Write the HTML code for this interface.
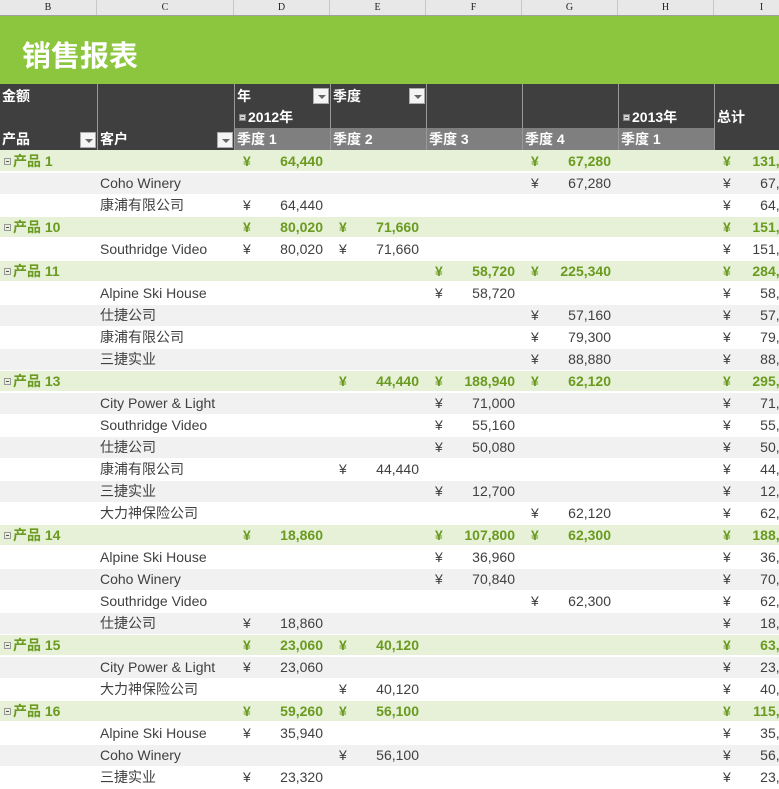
<!DOCTYPE html>
<html><head><meta charset="utf-8"><style>
*{margin:0;padding:0;box-sizing:border-box}
body{width:779px;height:779px;overflow:hidden;background:#fff;font-family:"Liberation Sans","Noto Sans CJK SC",sans-serif;position:relative}
.colbar{position:absolute;left:0;top:0;width:810px;height:16px;background:#e8e8e8;border-bottom:1px solid #a0a0a0;display:flex}
.colbar div{height:15px;font:10px "Liberation Serif",serif;text-align:center;line-height:15px;color:#222;border-right:1px solid #c8c8c8}
.title{position:absolute;left:0;top:16px;width:779px;height:68px;background:#8bc63e;color:#fff;font:bold 29px "Liberation Sans","Noto Sans CJK SC",sans-serif;padding:17px 0 0 22px}
.hdr{position:absolute;left:0;top:84px;width:810px;height:66px;background:#3f3f3f}
.gray{position:absolute;top:128px;left:234px;width:480px;height:22px;background:#7f7f7f}
.vl{position:absolute;top:84px;height:66px;width:1px;background:#999}
.ht{position:absolute;color:#fff;font-weight:bold;font-size:14px;line-height:16px}
.dd{position:absolute;width:16px;height:16px;background:#f4f4f4;border:1px solid #aaa}
.dd:after{content:"";position:absolute;left:4px;top:6px;border-left:4px solid transparent;border-right:4px solid transparent;border-top:4px solid #666}
.mn{display:inline-block;width:7px;height:7px;background:#ccc;border:1px solid #888;margin-right:2px;vertical-align:1px;position:relative}
.mn:after{content:"";position:absolute;left:1px;top:2px;width:3px;height:1px;background:#555}
table{position:absolute;left:0;top:150px;border-collapse:collapse;table-layout:fixed;width:810px;font-size:14px;color:#404040}
td{height:22px;padding:0;white-space:nowrap;overflow:hidden;border-bottom:1px solid #fff}
tr.p td{background:#e6f1d8;color:#6a9a1f;font-weight:bold;border-bottom:2px solid #fff}
tr.g td{background:#f1f1f1}
td.c{padding-left:3px}
.v{display:flex;justify-content:space-between;padding:0 7px 0 9px}
tr.p .mn{background:#e6f1d8;border-color:#999;margin:0 2px 0 4px}
</style></head><body>
<div class="colbar"><div style="width:97px">B</div><div style="width:137px">C</div><div style="width:96px">D</div><div style="width:96px">E</div><div style="width:96px">F</div><div style="width:96px">G</div><div style="width:96px">H</div><div style="width:96px">I</div></div>
<div class="title">销售报表</div>
<div class="hdr"></div>
<div class="gray"></div>
<div class="vl" style="left:97px"></div><div class="vl" style="left:234px"></div><div class="vl" style="left:330px"></div><div class="vl" style="left:426px"></div><div class="vl" style="left:522px"></div><div class="vl" style="left:618px"></div><div class="vl" style="left:714px"></div>
<div class="ht" style="left:2px;top:88px">金额</div>
<div class="ht" style="left:237px;top:88px">年</div>
<div class="ht" style="left:333px;top:88px">季度</div>
<div class="dd" style="left:313px;top:88px"></div>
<div class="dd" style="left:409px;top:88px"></div>
<div class="ht" style="left:239px;top:109px"><span class="mn"></span>2012年</div>
<div class="ht" style="left:623px;top:109px"><span class="mn"></span>2013年</div>
<div class="ht" style="left:717px;top:109px">总计</div>
<div class="ht" style="left:2px;top:131px">产品</div>
<div class="ht" style="left:100px;top:131px">客户</div>
<div class="dd" style="left:80px;top:132px"></div>
<div class="dd" style="left:217px;top:132px"></div>
<div class="ht" style="left:237px;top:131px">季度 1</div>
<div class="ht" style="left:333px;top:131px">季度 2</div>
<div class="ht" style="left:429px;top:131px">季度 3</div>
<div class="ht" style="left:525px;top:131px">季度 4</div>
<div class="ht" style="left:621px;top:131px">季度 1</div>
<table>
<colgroup><col style="width:97px"><col style="width:137px"><col style="width:96px"><col style="width:96px"><col style="width:96px"><col style="width:96px"><col style="width:96px"><col style="width:96px"></colgroup>
<tr class="p"><td><span class="mn"></span>产品 1</td><td></td><td><div class="v"><span>¥</span><span>64,440</span></div></td><td></td><td></td><td><div class="v"><span>¥</span><span>67,280</span></div></td><td></td><td><div class="v"><span>¥</span><span>131,720</span></div></td></tr>
<tr class="g"><td></td><td class="c">Coho Winery</td><td></td><td></td><td></td><td><div class="v"><span>¥</span><span>67,280</span></div></td><td></td><td><div class="v"><span>¥</span><span>67,280</span></div></td></tr>
<tr><td></td><td class="c">康浦有限公司</td><td><div class="v"><span>¥</span><span>64,440</span></div></td><td></td><td></td><td></td><td></td><td><div class="v"><span>¥</span><span>64,440</span></div></td></tr>
<tr class="p"><td><span class="mn"></span>产品 10</td><td></td><td><div class="v"><span>¥</span><span>80,020</span></div></td><td><div class="v"><span>¥</span><span>71,660</span></div></td><td></td><td></td><td></td><td><div class="v"><span>¥</span><span>151,680</span></div></td></tr>
<tr><td></td><td class="c">Southridge Video</td><td><div class="v"><span>¥</span><span>80,020</span></div></td><td><div class="v"><span>¥</span><span>71,660</span></div></td><td></td><td></td><td></td><td><div class="v"><span>¥</span><span>151,680</span></div></td></tr>
<tr class="p"><td><span class="mn"></span>产品 11</td><td></td><td></td><td></td><td><div class="v"><span>¥</span><span>58,720</span></div></td><td><div class="v"><span>¥</span><span>225,340</span></div></td><td></td><td><div class="v"><span>¥</span><span>284,060</span></div></td></tr>
<tr><td></td><td class="c">Alpine Ski House</td><td></td><td></td><td><div class="v"><span>¥</span><span>58,720</span></div></td><td></td><td></td><td><div class="v"><span>¥</span><span>58,720</span></div></td></tr>
<tr class="g"><td></td><td class="c">仕捷公司</td><td></td><td></td><td></td><td><div class="v"><span>¥</span><span>57,160</span></div></td><td></td><td><div class="v"><span>¥</span><span>57,160</span></div></td></tr>
<tr><td></td><td class="c">康浦有限公司</td><td></td><td></td><td></td><td><div class="v"><span>¥</span><span>79,300</span></div></td><td></td><td><div class="v"><span>¥</span><span>79,300</span></div></td></tr>
<tr class="g"><td></td><td class="c">三捷实业</td><td></td><td></td><td></td><td><div class="v"><span>¥</span><span>88,880</span></div></td><td></td><td><div class="v"><span>¥</span><span>88,880</span></div></td></tr>
<tr class="p"><td><span class="mn"></span>产品 13</td><td></td><td></td><td><div class="v"><span>¥</span><span>44,440</span></div></td><td><div class="v"><span>¥</span><span>188,940</span></div></td><td><div class="v"><span>¥</span><span>62,120</span></div></td><td></td><td><div class="v"><span>¥</span><span>295,500</span></div></td></tr>
<tr class="g"><td></td><td class="c">City Power &amp; Light</td><td></td><td></td><td><div class="v"><span>¥</span><span>71,000</span></div></td><td></td><td></td><td><div class="v"><span>¥</span><span>71,000</span></div></td></tr>
<tr><td></td><td class="c">Southridge Video</td><td></td><td></td><td><div class="v"><span>¥</span><span>55,160</span></div></td><td></td><td></td><td><div class="v"><span>¥</span><span>55,160</span></div></td></tr>
<tr class="g"><td></td><td class="c">仕捷公司</td><td></td><td></td><td><div class="v"><span>¥</span><span>50,080</span></div></td><td></td><td></td><td><div class="v"><span>¥</span><span>50,080</span></div></td></tr>
<tr><td></td><td class="c">康浦有限公司</td><td></td><td><div class="v"><span>¥</span><span>44,440</span></div></td><td></td><td></td><td></td><td><div class="v"><span>¥</span><span>44,440</span></div></td></tr>
<tr class="g"><td></td><td class="c">三捷实业</td><td></td><td></td><td><div class="v"><span>¥</span><span>12,700</span></div></td><td></td><td></td><td><div class="v"><span>¥</span><span>12,700</span></div></td></tr>
<tr><td></td><td class="c">大力神保险公司</td><td></td><td></td><td></td><td><div class="v"><span>¥</span><span>62,120</span></div></td><td></td><td><div class="v"><span>¥</span><span>62,120</span></div></td></tr>
<tr class="p"><td><span class="mn"></span>产品 14</td><td></td><td><div class="v"><span>¥</span><span>18,860</span></div></td><td></td><td><div class="v"><span>¥</span><span>107,800</span></div></td><td><div class="v"><span>¥</span><span>62,300</span></div></td><td></td><td><div class="v"><span>¥</span><span>188,960</span></div></td></tr>
<tr><td></td><td class="c">Alpine Ski House</td><td></td><td></td><td><div class="v"><span>¥</span><span>36,960</span></div></td><td></td><td></td><td><div class="v"><span>¥</span><span>36,960</span></div></td></tr>
<tr class="g"><td></td><td class="c">Coho Winery</td><td></td><td></td><td><div class="v"><span>¥</span><span>70,840</span></div></td><td></td><td></td><td><div class="v"><span>¥</span><span>70,840</span></div></td></tr>
<tr><td></td><td class="c">Southridge Video</td><td></td><td></td><td></td><td><div class="v"><span>¥</span><span>62,300</span></div></td><td></td><td><div class="v"><span>¥</span><span>62,300</span></div></td></tr>
<tr class="g"><td></td><td class="c">仕捷公司</td><td><div class="v"><span>¥</span><span>18,860</span></div></td><td></td><td></td><td></td><td></td><td><div class="v"><span>¥</span><span>18,860</span></div></td></tr>
<tr class="p"><td><span class="mn"></span>产品 15</td><td></td><td><div class="v"><span>¥</span><span>23,060</span></div></td><td><div class="v"><span>¥</span><span>40,120</span></div></td><td></td><td></td><td></td><td><div class="v"><span>¥</span><span>63,180</span></div></td></tr>
<tr class="g"><td></td><td class="c">City Power &amp; Light</td><td><div class="v"><span>¥</span><span>23,060</span></div></td><td></td><td></td><td></td><td></td><td><div class="v"><span>¥</span><span>23,060</span></div></td></tr>
<tr><td></td><td class="c">大力神保险公司</td><td></td><td><div class="v"><span>¥</span><span>40,120</span></div></td><td></td><td></td><td></td><td><div class="v"><span>¥</span><span>40,120</span></div></td></tr>
<tr class="p"><td><span class="mn"></span>产品 16</td><td></td><td><div class="v"><span>¥</span><span>59,260</span></div></td><td><div class="v"><span>¥</span><span>56,100</span></div></td><td></td><td></td><td></td><td><div class="v"><span>¥</span><span>115,360</span></div></td></tr>
<tr><td></td><td class="c">Alpine Ski House</td><td><div class="v"><span>¥</span><span>35,940</span></div></td><td></td><td></td><td></td><td></td><td><div class="v"><span>¥</span><span>35,940</span></div></td></tr>
<tr class="g"><td></td><td class="c">Coho Winery</td><td></td><td><div class="v"><span>¥</span><span>56,100</span></div></td><td></td><td></td><td></td><td><div class="v"><span>¥</span><span>56,100</span></div></td></tr>
<tr><td></td><td class="c">三捷实业</td><td><div class="v"><span>¥</span><span>23,320</span></div></td><td></td><td></td><td></td><td></td><td><div class="v"><span>¥</span><span>23,320</span></div></td></tr>
</table>
</body></html>
